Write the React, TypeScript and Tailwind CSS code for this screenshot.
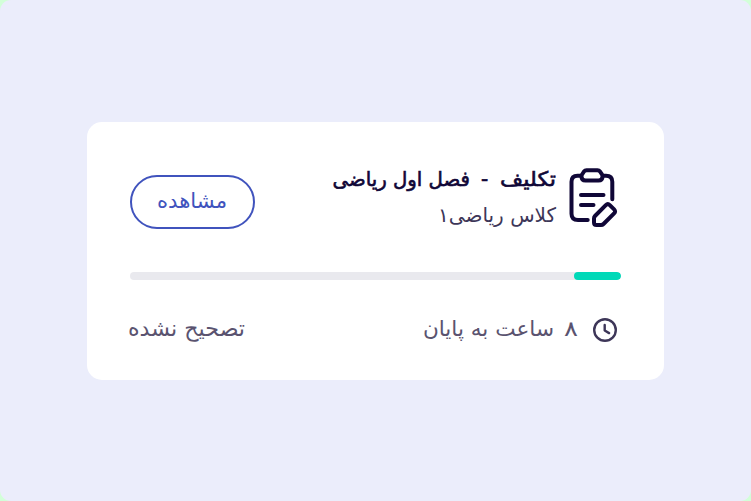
import React from "react";

function ClipboardEdit() {
  return (
    <svg className="block h-[61px] w-[50px] shrink-0" viewBox="568 167 50 61" fill="none" stroke="#100737" strokeWidth="4" strokeLinecap="round" strokeLinejoin="round">
      <path d="M581 175.800h-3.500q-6 0-6 6v32q0 6.200 6.500 6.200h9.700M603 175.800h3q6.300 0 6.300 6v17.500" />
      <path d="M586.500 170.200h11q1.500 0 2.500 1.300l1.800 2.700q.7 1.100.7 2.300q0 4-4 4h-13q-4 0-4-4q0-1.200.7-2.300l1.800-2.700q1-1.300 2.500-1.300z" />
      <path d="M581 195h22.500M581 205h12.500" />
      <path d="M594 222.500v-4q0-1.500 1-2.500l10.800-10.900q2-2 4 0l4.300 4.300q2 2 0 4l-10.600 10.600q-1 1-2.500 1h-4.500q-2.500 0-2.500-2.500z" />
    </svg>
  );
}

function Clock() {
  return (
    <svg className="block h-[26px] w-[26px]" viewBox="0 0 26 26" fill="none" stroke="#3d3658" strokeWidth="2.4" strokeLinecap="round" strokeLinejoin="round">
      <circle cx="13" cy="13" r="10.800" />
      <path d="M12.700 8v5.500l4.400 2.600" />
    </svg>
  );
}

export default function App() {
  return (
    <div className="bg-[#d2ffd8]">
      <main dir="rtl" className="flex h-[501px] w-[751px] items-center justify-center rounded-[11px] bg-[#ebedfb] font-['DejaVu_Sans',sans-serif]">
        <section className="h-[258px] w-[577px] rounded-[15px] bg-white pr-[43px] pl-[43px] pt-[39px]">
          <div className="flex h-[68px] justify-between">
            <div className="flex">
              <div className="mr-[3px] pt-[6px]"><ClipboardEdit /></div>
              <div className="mr-3 flex flex-col whitespace-nowrap">
                <h1 className="flex h-9 items-center text-[20px] leading-9 text-[#100737] [-webkit-text-stroke:0.6px_#100737]">
                  <span className="w-[57px] origin-right scale-x-[1.12]">تکلیف</span>
                  <span className="w-[29px] text-center">-</span>
                  <span className="w-[138px] origin-right scale-x-[0.985]">فصل اول ریاضی</span>
                </h1>
                <p className="h-9 text-[20px] leading-9 text-[#3d3658]">کلاس ریاضی۱</p>
              </div>
            </div>
            <button className="mt-[14px] flex h-[54px] w-[125px] shrink-0 items-center justify-center rounded-full border-2 border-[#4053bd] text-[21.200px] text-[#4053bd]">
              <span className="mr-px whitespace-nowrap pb-px">مشاهده</span>
            </button>
          </div>
          <div className="mt-[43px] h-2 overflow-hidden rounded-full bg-[#e9e9ee]">
            <div className="h-2 w-[47px] rounded-full bg-[#00d9b8]" />
          </div>
          <div className="mt-[33px] flex h-9 items-center justify-between text-[21.600px] text-[#5a536f]">
            <div className="flex items-center">
              <div className="mr-[3px]"><Clock /></div>
              <span className="mr-[14px] w-[24px] origin-right scale-x-[1.2] pb-[3px]">۸</span>
              <span className="whitespace-nowrap pb-[3px]">ساعت به پایان</span>
            </div>
            <span className="-ml-[2px] whitespace-nowrap pb-[3px] text-[22.200px]">تصحیح نشده</span>
          </div>
        </section>
      </main>
    </div>
  );
}
